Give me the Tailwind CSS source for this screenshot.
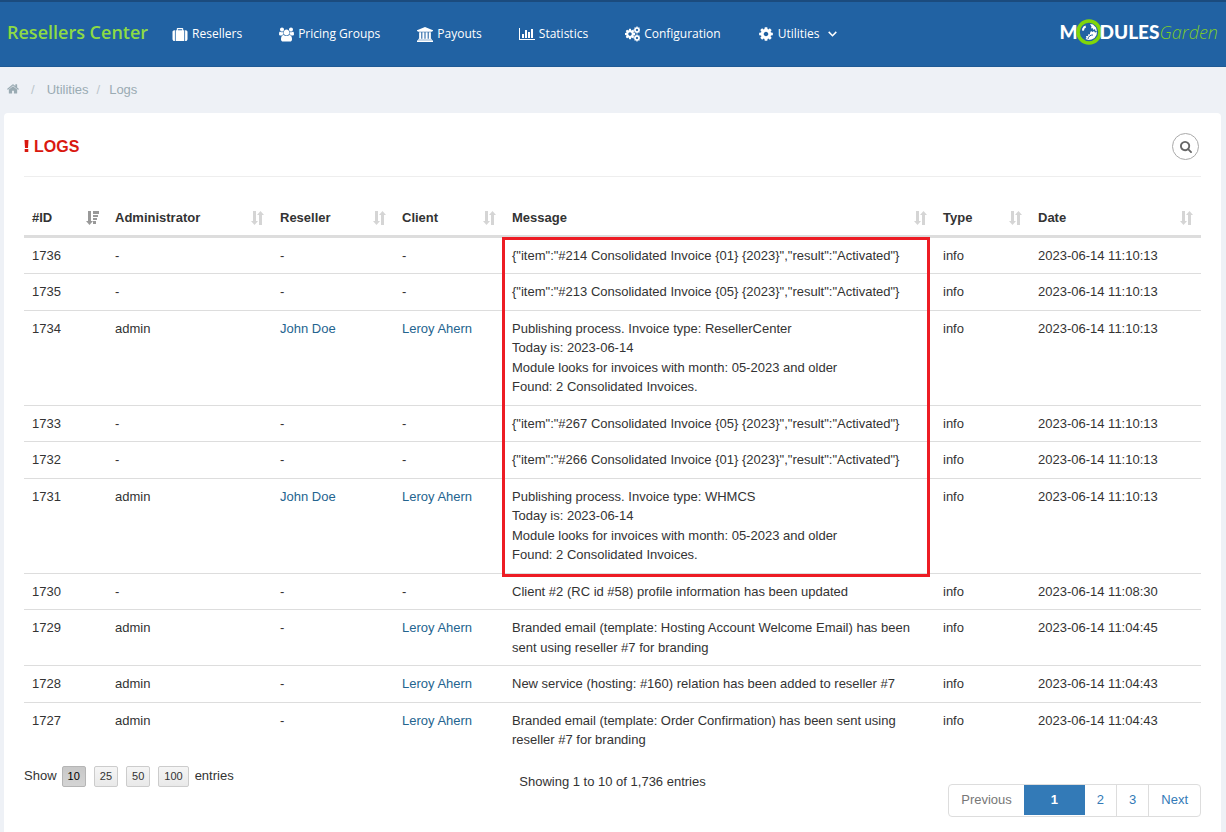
<!DOCTYPE html>
<html lang="en">
<head>
<meta charset="utf-8">
<meta name="viewport" content="width=device-width, initial-scale=1">
<title>Resellers Center - Logs</title>
<script src="https://cdn.jsdelivr.net/npm/@tailwindcss/browser@4"></script>
</head>
<body class="min-h-screen flex flex-col bg-[#eef1f6] font-['Liberation_Sans',Arial,sans-serif] text-[13px] leading-normal text-[#333]">

<svg class="hidden" aria-hidden="true">
  <symbol id="cog" viewBox="0 0 1792 1792"><path d="M1152 896q0-106-75-181t-181-75-181 75-75 181 75 181 181 75 181-75 75-181zm512-109v222q0 12-8 23t-20 13l-185 28q-19 54-39 91 35 50 107 138 10 12 10 25t-9 23q-27 37-99 108t-94 71q-12 0-26-9l-138-108q-44 23-91 38-16 136-29 186-7 28-36 28h-222q-14 0-24.5-8.5t-11.5-21.5l-28-184q-49-16-90-37l-141 107q-10 9-25 9-14 0-25-11-126-114-165-168-7-10-7-23 0-12 8-23 15-21 51-66.5t54-70.5q-27-50-41-99l-183-27q-13-2-21-12.5t-8-23.5v-222q0-12 8-23t19-13l186-28q14-46 39-92-40-57-107-138-10-12-10-24 0-10 9-23 26-36 98.5-107.5t94.5-71.5q13 0 26 10l138 107q44-23 91-38 16-136 29-186 7-28 36-28h222q14 0 24.5 8.5t11.5 21.5l28 184q49 16 90 37l142-107q9-9 24-9 13 0 25 10 129 119 165 170 7 8 7 22 0 12-8 23-15 21-51 66.5t-54 70.5q26 50 41 98l183 28q13 2 21 12.5t8 23.5z"/></symbol>
  <symbol id="sort" viewBox="0 0 13 14"><path d="M2 0h3v10h2L3.500 14 0 10h2zM8 14h3V4h2L9.500 0 6 4h2z"/></symbol>
  <symbol id="sort-desc" viewBox="0 0 13 14"><path d="M2 0h3v10h2L3.500 14 0 10h2zM7 0h6v3H7zM7 4h5v2H7zM7 7h4v2H7zM7 10h3v3H7z"/></symbol>
</svg>

<header class="flex h-[67px] items-center border-t-2 border-b border-t-[#1b4b7e] border-b-[#1f5a95] bg-[#2162a3] pl-[7px] pr-2 pb-1 font-['Open_Sans',sans-serif] text-white">
  <a href="#" class="text-[18px] font-semibold leading-6 text-[#8ddb44]">Resellers Center</a>
  <nav class="ml-6 mt-1 flex items-center gap-[37px] text-[12px] leading-5">
    <a href="#" class="flex items-center gap-1"><svg class="h-[15px] w-4" viewBox="0 0 1792 1792" fill="currentColor"><path d="M640 384h512v-128h-512v128zm-352 0v1280h-64q-92 0-158-66t-66-158v-832q0-92 66-158t158-66h64zm1120 0v1280h-1024v-1280h128v-160q0-40 28-68t68-28h576q40 0 68 28t28 68v160h128zm384 224v832q0 92-66 158t-158 66h-64v-1280h64q92 0 158 66t66 158z"/></svg>Resellers</a>
    <a href="#" class="flex items-center gap-1"><svg class="h-[15px] w-[15px]" viewBox="-64 0 1920 1792" fill="currentColor"><path d="M529 896q-162 5-265 128h-134q-82 0-138-40.500t-56-118.500q0-353 124-353 6 0 43.500 21t97.500 42.500 119 21.500q67 0 133-23-5 37-5 66 0 139 81 256zm1071 637q0 120-73 189.500t-194 69.500h-874q-121 0-194-69.500t-73-189.500q0-53 3.500-103.500t14-109 26.500-108.500 43-97.500 62-81 85.500-53.500 111.500-20q10 0 43 21.500t73 48 107 48 135 21.500 135-21.500 107-48 73-48 43-21.500q61 0 111.500 20t85.500 53.500 62 81 43 97.500 26.500 108.500 14 109 3.500 103.500zm-1024-1277q0 106-75 181t-181 75-181-75-75-181 75-181 181-75 181 75 75 181zm704 384q0 159-112.500 271.500t-271.500 112.500-271.500-112.500-112.500-271.500 112.500-271.500 271.500-112.500 271.500 112.500 112.500 271.500zm576 225q0 78-56 118.500t-138 40.500h-134q-103-123-265-128 81-117 81-256 0-29-5-66 66 23 133 23 59 0 119-21.500t97.500-42.500 43.500-21q124 0 124 353zm-128-609q0 106-75 181t-181 75-181-75-75-181 75-181 181-75 181 75 75 181z"/></svg>Pricing Groups</a>
    <a href="#" class="flex items-center gap-1"><svg class="h-[15px] w-4" viewBox="0 0 1920 1792" fill="currentColor"><path d="M960 0l960 384v128h-128q0 26-20.500 45t-48.500 19h-1526q-28 0-48.500-19t-20.500-45h-128v-128zm-704 640h256v768h128v-768h256v768h128v-768h256v768h128v-768h256v768h59q28 0 48.500 19t20.500 45v64h-1664v-64q0-26 20.500-45t48.500-19h59v-768zm1595 960q28 0 48.500 19t20.500 45v128h-1920v-128q0-26 20.500-45t48.500-19h1782z"/></svg>Payouts</a>
    <a href="#" class="flex items-center gap-1"><svg class="h-[14px] w-4" viewBox="0 0 2048 1792" fill="currentColor"><path d="M640 896v512h-256v-512h256zm384-512v1024h-256v-1024h256zm1024 1152v128h-2048v-1536h128v1408h1920zm-640-896v768h-256v-768h256zm384-384v1152h-256v-1152h256z"/></svg>Statistics</a>
    <a href="#" class="flex items-center gap-1"><svg class="h-4 w-[15px]" viewBox="0 0 15 16" fill="currentColor"><use href="#cog" x="-1" y="2" width="12" height="12"/><use href="#cog" x="8" y="0" width="8" height="8"/><use href="#cog" x="8" y="8" width="8" height="8"/></svg>Configuration</a>
    <a href="#" class="flex items-center gap-1"><svg class="h-4 w-4" fill="currentColor"><use href="#cog"/></svg>Utilities<svg class="ml-1 h-[6px] w-[9px]" viewBox="0 0 9 6" fill="none" stroke="currentColor" stroke-width="1.500"><path d="M.7.900l3.800 3.800L8.300.900"/></svg></a>
  </nav>
  <a href="#" aria-label="ModulesGarden" class="ml-auto flex items-center font-['Lato',sans-serif] text-[19px] font-black leading-6"><span>M</span><svg class="-mx-[2px] h-[26px] w-[26px]" viewBox="0 0 26 26"><circle cx="13" cy="13" r="11" fill="#2162a3" stroke="#80d60a" stroke-width="3.600"/><g fill="#fff"><path d="M14 5l3 .500 3 3 1 4-1.500-.500-.500-2-1.500 1-1-2-1.500.500.500-2zM6 10l1.500-2.500 2-1 .500 2-1.500 1-.500 2-1.500.500zM14 14l1-2 1.500 1 1.500-1 1 1.500 2-.500-.500 3-2 3-3 1.500-3 .500-3-1 1-1-.500-2 2 0 .500-2 1.500.500z"/></g><path d="M12 20a4.500 4.500 0 0 1 5-4" fill="none" stroke="#2162a3" stroke-width="1"/></svg><span>DULES</span><span class="font-['Open_Sans',sans-serif] text-[18px] font-light italic text-[#7ccb2c]">Garden</span></a>
</header>

<nav aria-label="Breadcrumb" class="flex h-[46px] items-center pl-[7px] text-[#9aabb3]">
  <a href="#" aria-label="Home"><svg class="mb-[2px] h-3 w-3" viewBox="64 200 1664 1400" fill="currentColor"><path d="M1472 992v480q0 26-19 45t-45 19h-384v-384h-256v384h-384q-26 0-45-19t-19-45v-480q0-1 .5-3t.5-3l575-474 575 474q1 2 1 6zm223-69l-62 74q-8 9-21 11h-3q-13 0-21-7l-692-577-692 577q-12 8-24 7-13-2-21-11l-62-74q-8-10-7-23.500t11-21.500l719-599q32-26 76-26t76 26l244 204v-195q0-14 9-23t23-9h192q14 0 23 9t9 23v408l219 182q10 8 11 21.500t-7 23.500z"/></svg></a>
  <span class="ml-3 text-[#bcc6cc]">/</span>
  <a href="#" class="ml-3">Utilities</a>
  <span class="ml-2 text-[#bcc6cc]">/</span>
  <span class="ml-[9px]">Logs</span>
</nav>

<main class="ml-1 mr-[5px] flex-1 rounded-t bg-white px-5">
  <div class="flex h-16 items-center justify-between border-b border-[#eee] pt-1 pr-[2px]">
    <h1 class="flex items-center gap-[5px] text-[16px] font-bold leading-5 text-[#d9180f]"><svg class="mb-[2px] h-3 w-[5px]" viewBox="0 0 5 12" fill="currentColor"><path d="M.5 0h4L4 8H1zM.7 9h3.600v3H.7z"/></svg>LOGS</h1>
    <button type="button" aria-label="Search" class="flex h-[27px] w-[27px] items-center justify-center rounded-full border border-[#aaa] bg-white text-[#666]"><svg class="h-3 w-3" viewBox="64 128 1664 1664" fill="currentColor"><path d="M1216 832q0-185-131.500-316.500t-316.500-131.500-316.500 131.500-131.500 316.500 131.500 316.500 316.500 131.500 316.500-131.500 131.500-316.500zm512 832q0 52-38 90t-90 38q-54 0-90-38l-343-342q-179 124-399 124-143 0-273.500-55.500t-225-150-150-225-55.500-273.500 55.500-273.500 150-225 225-150 273.500-55.500 273.500 55.500 225 150 150 225 55.500 273.500q0 220-124 399l343 343q37 37 37 90z"/></svg></button>
  </div>

  <div class="relative mt-[22px]">
    <table class="w-full table-fixed border-collapse text-left [&_td]:border-t [&_td]:border-[#ddd] [&_td]:p-2 [&_td]:align-top [&_th]:px-2 [&_th]:pt-[9px] [&_th]:pb-[7px] [&_a]:text-[#24648f] [&_th_svg]:h-[14px] [&_th_svg]:w-[13px] [&_th_svg]:fill-[#d5d5d5] [&_th_div]:flex [&_th_div]:items-center [&_th_div]:justify-between">
      <colgroup><col class="w-[83px]"><col class="w-[165px]"><col class="w-[122px]"><col class="w-[110px]"><col><col class="w-[95px]"><col class="w-[171px]"></colgroup>
      <thead class="border-b-3 border-[#ddd]">
        <tr>
          <th><div>#ID<svg class="fill-[#999]!"><use href="#sort-desc"/></svg></div></th>
          <th><div>Administrator<svg><use href="#sort"/></svg></div></th>
          <th><div>Reseller<svg><use href="#sort"/></svg></div></th>
          <th><div>Client<svg><use href="#sort"/></svg></div></th>
          <th><div>Message<svg><use href="#sort"/></svg></div></th>
          <th><div>Type<svg><use href="#sort"/></svg></div></th>
          <th><div>Date<svg><use href="#sort"/></svg></div></th>
        </tr>
      </thead>
      <tbody>
        <tr><td>1736</td><td>-</td><td>-</td><td>-</td><td>{"item":"#214 Consolidated Invoice {01} {2023}","result":"Activated"}</td><td>info</td><td>2023-06-14 11:10:13</td></tr>
        <tr><td>1735</td><td>-</td><td>-</td><td>-</td><td>{"item":"#213 Consolidated Invoice {05} {2023}","result":"Activated"}</td><td>info</td><td>2023-06-14 11:10:13</td></tr>
        <tr><td>1734</td><td>admin</td><td><a href="#">John Doe</a></td><td><a href="#">Leroy Ahern</a></td><td>Publishing process. Invoice type: ResellerCenter<br>Today is: 2023-06-14<br>Module looks for invoices with month: 05-2023 and older<br>Found: 2 Consolidated Invoices.</td><td>info</td><td>2023-06-14 11:10:13</td></tr>
        <tr><td>1733</td><td>-</td><td>-</td><td>-</td><td>{"item":"#267 Consolidated Invoice {05} {2023}","result":"Activated"}</td><td>info</td><td>2023-06-14 11:10:13</td></tr>
        <tr><td>1732</td><td>-</td><td>-</td><td>-</td><td>{"item":"#266 Consolidated Invoice {01} {2023}","result":"Activated"}</td><td>info</td><td>2023-06-14 11:10:13</td></tr>
        <tr><td>1731</td><td>admin</td><td><a href="#">John Doe</a></td><td><a href="#">Leroy Ahern</a></td><td>Publishing process. Invoice type: WHMCS<br>Today is: 2023-06-14<br>Module looks for invoices with month: 05-2023 and older<br>Found: 2 Consolidated Invoices.</td><td>info</td><td>2023-06-14 11:10:13</td></tr>
        <tr><td>1730</td><td>-</td><td>-</td><td>-</td><td>Client #2 (RC id #58) profile information has been updated</td><td>info</td><td>2023-06-14 11:08:30</td></tr>
        <tr><td>1729</td><td>admin</td><td>-</td><td><a href="#">Leroy Ahern</a></td><td>Branded email (template: Hosting Account Welcome Email) has been sent using reseller #7 for branding</td><td>info</td><td>2023-06-14 11:04:45</td></tr>
        <tr><td>1728</td><td>admin</td><td>-</td><td><a href="#">Leroy Ahern</a></td><td>New service (hosting: #160) relation has been added to reseller #7</td><td>info</td><td>2023-06-14 11:04:43</td></tr>
        <tr><td>1727</td><td>admin</td><td>-</td><td><a href="#">Leroy Ahern</a></td><td>Branded email (template: Order Confirmation) has been sent using reseller #7 for branding</td><td>info</td><td>2023-06-14 11:04:43</td></tr>
      </tbody>
    </table>
    <!-- Highlight around the messages of the first six rows -->
    <div class="pointer-events-none absolute left-[478px] right-[271px] top-[38px] h-[340px] border-3 border-[#ed1c24]"></div>
  </div>

  <div class="flex items-start justify-between pt-2 pb-4">
    <div class="flex flex-1 items-center">
      <span class="mr-[5px]">Show</span>
      <div class="mr-[6px] flex gap-2 text-[11px] leading-[19px] text-[#333] [&_button]:rounded-xs [&_button]:border [&_button]:border-[#ccc] [&_button]:bg-linear-to-b [&_button]:from-[#f5f5f5] [&_button]:to-[#e9e9e9] [&_button]:px-[5px]">
        <button type="button" aria-pressed="true" class="border-[#b5b5b5]! from-[#c8c8c8]! to-[#d4d4d4]! text-black">10</button>
        <button type="button">25</button>
        <button type="button">50</button>
        <button type="button">100</button>
      </div>
      <span>entries</span>
    </div>
    <p class="pt-[6px]">Showing 1 to 10 of 1,736 entries</p>
    <nav aria-label="Pagination" class="mt-[18px] flex flex-1 justify-end text-[#337ab7]">
      <div class="flex h-[33px] rounded border border-[#ddd] leading-[30px]">
        <a href="#" class="px-3 text-[#777]">Previous</a>
        <a href="#" aria-current="page" class="mb-px w-[61px] bg-[#337ab7] text-center font-bold text-white">1</a>
        <a href="#" class="border-r border-[#ddd] px-3">2</a>
        <a href="#" class="border-r border-[#ddd] px-3">3</a>
        <a href="#" class="px-3">Next</a>
      </div>
    </nav>
  </div>
</main>
</body>
</html>
